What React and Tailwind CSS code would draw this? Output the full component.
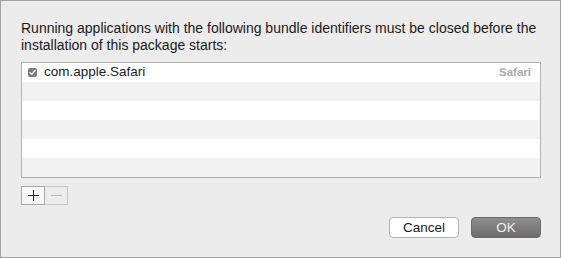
import React from "react";

const rows = [
  { id: "com.apple.Safari", name: "Safari" },
  null,
  null,
  null,
  null,
  null,
];

const Checkbox = () => (
  <span className="flex items-center justify-center w-[9px] h-[9px] rounded-[2px] bg-[#7b7b7b]">
    <svg width="7" height="7" viewBox="0 0 7 7" fill="none">
      <path d="M1 3.6 L2.8 5.3 L6 1.4" stroke="#ffffff" strokeWidth="1.3" strokeLinecap="round" strokeLinejoin="round" />
    </svg>
  </span>
);

export default function App() {
  return (
    <div
      className="w-[561px] h-[258px] border border-[#a0a0a0] bg-[#ececec] flex flex-col pl-[20px] pr-[19px] pt-[19px] text-[13px] text-[#1a1a1a]"
      style={{ fontFamily: '"Liberation Sans", Arial, sans-serif' }}
    >
      {/* message */}
      <p className="text-[14px] leading-[17px]">
        Running applications with the following bundle identifiers must be closed before the installation of this package starts:
      </p>

      {/* list of bundle ids */}
      <div className="mt-[8px] border border-[#b3b3b3] bg-white">
        {rows.map((row, i) => (
          <div
            key={i}
            className={`h-[19px] flex items-center pl-[6px] pr-[9px] ${i % 2 === 0 ? "bg-white" : "bg-[#f2f2f2]"}`}
          >
            {row && (
              <>
                <Checkbox />
                <span className="ml-[7px] text-[13.5px] text-[#222]">{row.id}</span>
                <span className="ml-auto text-[11.5px] font-bold text-[#a9a9a9]">{row.name}</span>
              </>
            )}
          </div>
        ))}
      </div>

      {/* add / remove */}
      <div className="mt-[8px] flex">
        <button className="w-[24px] h-[19px] flex items-center justify-center border border-[#a8a8a8] bg-[#f7f7f7]">
          <svg width="11" height="11" viewBox="0 0 11 11">
            <path d="M5.5 0 V11 M0 5.5 H11" stroke="#222" strokeWidth="1" />
          </svg>
        </button>
        <button className="w-[23px] h-[19px] flex items-center justify-center border border-l-0 border-[#c8c8c8] bg-[#ececec]">
          <svg width="11" height="11" viewBox="0 0 11 11">
            <path d="M0 5.5 H11" stroke="#b5b5b5" strokeWidth="1" />
          </svg>
        </button>
      </div>

      {/* dialog buttons */}
      <div className="mt-[12px] flex justify-end gap-[12px]">
        <button className="w-[70px] h-[21px] rounded-[4px] border border-[#b2b2b2] bg-white text-[13.5px] text-[#1a1a1a] leading-none">
          Cancel
        </button>
        <button className="w-[70px] h-[21px] rounded-[4px] border border-[#6a6a6a] bg-gradient-to-b from-[#8e8e8e] to-[#6c6c6c] text-[13.5px] text-[#f2f2f2] leading-none">
          OK
        </button>
      </div>
    </div>
  );
}
